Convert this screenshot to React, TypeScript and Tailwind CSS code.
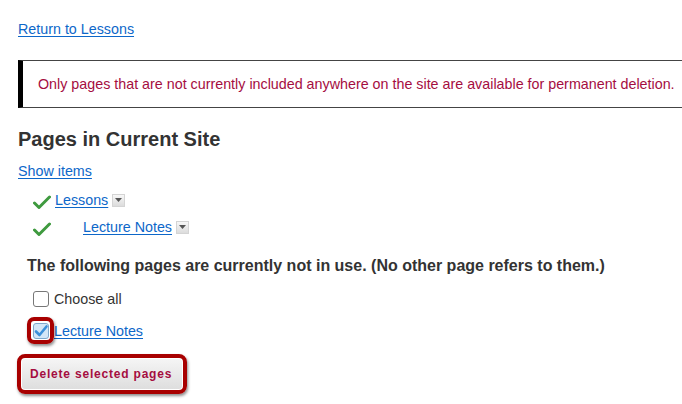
import { useState } from "react";

function Check() {
  return (
    <svg width="18" height="14" viewBox="0 0 18 14" className="mt-[3px] shrink-0">
      <path d="M1.5 8 L6 12.5 L16.5 2" fill="none" stroke="#3f9a3f" strokeWidth="3" strokeLinecap="round" strokeLinejoin="round" />
    </svg>
  );
}

function MenuButton() {
  return (
    <span className="ml-[4px] inline-flex h-[13px] w-[13px] items-center justify-center border border-[#d4d4d4] bg-gradient-to-b from-[#f7f7f7] to-[#dcdcdc] align-middle">
      <svg width="7" height="4" viewBox="0 0 7 4">
        <path d="M0 0 H7 L3.5 4 Z" fill="#555" />
      </svg>
    </span>
  );
}

function Box({ checked }: { checked?: boolean }) {
  if (checked) {
    return (
      <svg width="16" height="16" viewBox="0 0 16 16" className="shrink-0">
        <rect x="0.5" y="0.5" width="15" height="15" rx="2.5" fill="#d3e6f7" stroke="#7fa8cc" />
        <path d="M3 8.5 L6.5 12 L13.5 3.5" fill="none" stroke="#3b8fd9" strokeWidth="2.6" strokeLinecap="round" strokeLinejoin="round" />
      </svg>
    );
  }
  return <span className="h-[16px] w-[16px] shrink-0 rounded-[3px] border border-[#777] bg-white" />;
}

export default function App() {
  const [all, setAll] = useState(false);
  const link = "text-[#0d67c9] underline underline-offset-[2px]";

  return (
    <div className="h-[404px] w-[682px] overflow-hidden bg-white px-[18px] pt-[19px] font-['Liberation_Sans',Arial,sans-serif] text-[14.3px] leading-[20px] text-[#333]">
      <a href="#" className={link}>Return to Lessons</a>

      {/* Notice */}
      <div className="-mr-[30px] mt-[21px] border-y border-l-[5px] border-y-[#444] border-l-black pb-[13px] pl-[15px] pt-[13px] text-[#a50d3f]">
        Only pages that are not currently included anywhere on the site are available for permanent deletion.
      </div>

      <h2 className="mt-[17px] text-[20px] font-bold leading-[28px] text-[#333]">Pages in Current Site</h2>

      <div className="mt-[8px]">
        <a href="#" className={link}>Show items</a>
      </div>

      {/* Page tree */}
      <div className="mt-[9px] flex items-center pl-[15px]">
        <Check />
        <a href="#" className={`ml-[4px] ${link}`}>Lessons</a>
        <MenuButton />
      </div>
      <div className="mt-[7px] flex items-center pl-[15px]">
        <Check />
        <a href="#" className={`ml-[32px] ${link}`}>Lecture Notes</a>
        <MenuButton />
      </div>

      <h3 className="mt-[17px] pl-[9px] text-[16px] font-bold leading-[24px] text-[#333]">
        The following pages are currently not in use. (No other page refers to them.)
      </h3>

      <label className="mt-[11px] flex items-center gap-[5px] pl-[15px]" onClick={() => setAll(!all)}>
        <Box checked={all} />
        <span>Choose all</span>
      </label>

      <div className="relative mt-[12px] flex items-center gap-[5px] pl-[15px]">
        <Box checked />
        <a href="#" className={link}>Lecture Notes</a>
        {/* annotation */}
        <span className="absolute left-[9px] top-[-4px] h-[27px] w-[27px] rounded-[7px] border-[4px] border-[#a80000] shadow-[1px_2px_3px_rgba(0,0,0,0.45)]" />
      </div>

      <div className="relative mt-[18px] inline-block">
        <button className="ml-[4px] h-[30px] rounded-[3px] bg-gradient-to-b from-[#f5f5f5] to-[#dedede] pl-[8px] pr-[10px] text-[12px] font-bold tracking-[0.8px] text-[#a50d3f]">
          Delete selected pages
        </button>
        <span className="absolute -left-[1px] -right-[5px] -top-[5px] -bottom-[5px] rounded-[8px] border-[4px] border-[#a80000] shadow-[1px_2px_3px_rgba(0,0,0,0.45)]" />
      </div>
    </div>
  );
}
